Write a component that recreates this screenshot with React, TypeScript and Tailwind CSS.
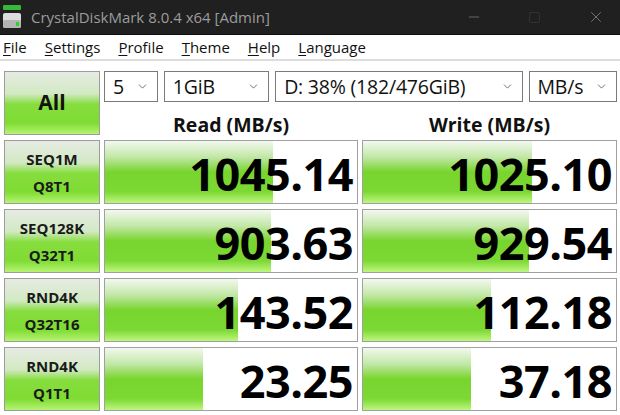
import { ChevronDown, Minus, Square, X } from "lucide-react";

const rows = [
  { a: "SEQ1M", b: "Q8T1", read: "1045.14", write: "1025.10", r: 0.667, w: 0.668 },
  { a: "SEQ128K", b: "Q32T1", read: "903.63", write: "929.54", r: 0.659, w: 0.656 },
  { a: "RND4K", b: "Q32T16", read: "143.52", write: "112.18", r: 0.528, w: 0.506 },
  { a: "RND4K", b: "Q1T1", read: "23.25", write: "37.18", r: 0.389, w: 0.427 },
];

const menus = ["File", "Settings", "Profile", "Theme", "Help", "Language"];

function AppIcon() {
  return (
    <svg width="18" height="24" viewBox="0 0 18 24">
      <rect x="0" y="0" width="18" height="5" rx="1" fill="#36b936" />
      <rect x="0" y="8" width="18" height="15" rx="2" fill="#dcdcdc" />
      <rect x="0" y="15" width="18" height="8" rx="2" fill="#b4b4b4" />
      <rect x="13" y="17" width="3" height="4" fill="#2fd12f" />
    </svg>
  );
}

function Select({ label, w }: { label: string; w: string }) {
  return (
    <div className={`${w} flex h-[31px] items-center justify-between border border-[#7a7a7a] bg-white pl-[8px] pr-[8px]`}>
      <span className="text-[19.5px] leading-none tracking-[-0.2px] text-[#111]">{label}</span>
      <ChevronDown className="h-[13px] w-[13px] text-[#555]" strokeWidth={1.5} />
    </div>
  );
}

const labelBg =
  "bg-[linear-gradient(to_bottom,#e6ebe3_0%,#d2e9c3_35%,#86dd3e_52%,#7fdc33_82%,#b6f472_100%)]";

function Label({ a, b }: { a: string; b: string }) {
  return (
    <div className={`flex h-[64px] flex-col items-center justify-center border border-[#9c9c9c] ${labelBg} pt-[2px] text-[15px] font-bold leading-[27px] text-[#1a1a1a]`}>
      <span>{a}</span>
      <span>{b}</span>
    </div>
  );
}

function Bar({ value, fill }: { value: string; fill: number }) {
  return (
    <div className="relative h-[64px] border border-[#a0a0a0] bg-white">
      <div
        className="absolute inset-y-0 left-0 bg-[linear-gradient(to_bottom,#f2f8ee_0%,#c4e8aa_25%,#78d52e_50%,#7cd934_82%,#bff67f_100%)]"
        style={{ width: `${fill * 100}%` }}
      />
      <div className="relative flex h-full items-center justify-end pr-[4px] pt-[2px] text-[45px] font-bold leading-none tracking-[-0.5px] text-black">
        {value}
      </div>
    </div>
  );
}

export default function App() {
  return (
    <div className="flex h-[415px] w-[620px] flex-col overflow-hidden bg-white font-['Open_Sans',sans-serif]">
      <div className="flex h-[35px] items-center border-b border-[#111] bg-[#202020]">
        <div className="ml-[3px] mr-[10px]">
          <AppIcon />
        </div>
        <span className="text-[15px] text-[#9c9c9c]">CrystalDiskMark 8.0.4 x64 [Admin]</span>
        <div className="ml-auto flex h-full items-center gap-[46px] pr-[15px]">
          <Minus className="h-[16px] w-[16px] text-[#8c8c8c]" strokeWidth={1} />
          <Square className="h-[13px] w-[13px] text-[#444]" strokeWidth={1} />
          <X className="h-[18px] w-[18px] text-[#8c8c8c]" strokeWidth={1} />
        </div>
      </div>

      <div className="flex h-[26px] items-center gap-[18px] border-b-2 border-[#dcdcdc] pl-[3px] text-[15px] text-[#111]">
        {menus.map((m) => (
          <span key={m}>
            <span className="underline underline-offset-2">{m[0]}</span>
            {m.slice(1)}
          </span>
        ))}
      </div>

      <div className="grid grid-cols-[96px_254px_255px] gap-x-[4px] gap-y-[5px] pl-[4px] pt-[10px]">
        <div className={`flex h-[64px] items-center justify-center border border-[#9c9c9c] ${labelBg} text-[21px] font-bold text-[#111]`}>
          All
        </div>
        <div className="col-span-2 flex h-[64px] flex-col">
          <div className="flex gap-[6px]">
            <Select label="5" w="w-[54px]" />
            <Select label="1GiB" w="w-[106px]" />
            <Select label="D: 38% (182/476GiB)" w="w-[249px]" />
            <Select label="MB/s" w="w-[89px]" />
          </div>
          <div className="grid flex-1 grid-cols-[254px_255px] items-center gap-x-[4px] pt-[12px] text-[19.5px] font-bold leading-none text-[#111]">
            <div className="text-center">Read (MB/s)</div>
            <div className="text-center">Write (MB/s)</div>
          </div>
        </div>
        {rows.map((row, i) => (
          <div key={i} className="contents">
            <Label a={row.a} b={row.b} />
            <Bar value={row.read} fill={row.r} />
            <Bar value={row.write} fill={row.w} />
          </div>
        ))}
      </div>
    </div>
  );
}
